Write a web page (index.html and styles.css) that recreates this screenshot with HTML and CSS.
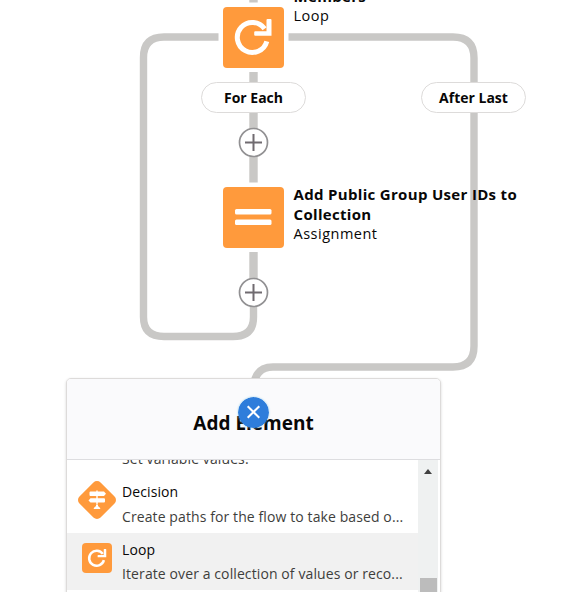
FILE: index.html
```html
<!DOCTYPE html>
<html lang="en">
<head>
    <meta charset="UTF-8">
    <meta name="viewport" content="width=device-width, initial-scale=1.0">
    <title>Flow Builder</title>
    <link rel="stylesheet" href="styles.css">
</head>
<body>
    <main class="canvas">
        <svg class="connectors" width="567" height="592" viewBox="0 0 567 592">
            <path class="stub" d="M253.500 0V2.500M253.500 72V182.500M253.500 252V300"/>
            <path d="M218.500 37H164Q143.500 37 143.500 57.500V317Q143.500 336.500 164 336.500H233Q253.500 336.500 253.500 317V290"/>
            <path d="M288.500 37H453Q474 37 474 58V346Q474 367 453 367H273Q255 367 253.500 387"/>
        </svg>

        <div class="node node-loop">
            <div class="node-icon">
                <svg width="60" height="60" viewBox="0 0 60 60">
                    <path class="loop-arc" d="M43.800 34.300A15 15 0 1 1 41.600 21.800"/>
                    <path class="loop-head" d="M43.500 13Q43.500 12 44.500 12H47.500Q48.500 12 48.500 13V28.700H32.200Q31.200 28.700 31.200 27.700V25.200Q31.200 24.200 32.200 24.200H43.500Z"/>
                </svg>
            </div>
            <div class="node-label">
                <b>Members</b>
                <span>Loop</span>
            </div>
        </div>

        <div class="node node-assignment">
            <div class="node-icon">
                <svg width="60" height="60" viewBox="0 0 60 60">
                    <rect x="12" y="22" width="36.500" height="5.500" rx="1.500" fill="#fff"/>
                    <rect x="12" y="32.500" width="36.500" height="5.500" rx="1.500" fill="#fff"/>
                </svg>
            </div>
            <div class="node-label">
                <b>Add Public Group User IDs to</b>
                <b>Collection</b>
                <span>Assignment</span>
            </div>
        </div>

        <div class="pill pill-each">For Each</div>
        <div class="pill pill-last">After Last</div>

        <svg class="plus plus-first" width="31" height="31" viewBox="0 0 31 31">
            <circle cx="15.500" cy="15.500" r="14"/>
            <path d="M15.500 7V24M7 15.500H24"/>
        </svg>
        <svg class="plus plus-second" width="31" height="31" viewBox="0 0 31 31">
            <circle cx="15.500" cy="15.500" r="14"/>
            <path d="M15.500 7V24M7 15.500H24"/>
        </svg>

        <section class="panel">
            <header class="panel-header">
                <h2>Add Element</h2>
            </header>
            <div class="panel-body">
                <ul class="elements">
                    <li class="element element-cut">
                        <span class="element-icon"></span>
                        <div class="element-text">
                            <p class="desc">Set variable values.</p>
                        </div>
                    </li>
                    <li class="element element-decision">
                        <span class="element-icon">
                            <svg width="40" height="40" viewBox="0 0 40 40">
                                <path d="M20 6L34 20L20 34L6 20Z" fill="#ff9a3c" stroke="#ff9a3c" stroke-width="10" stroke-linejoin="round"/>
                                <path d="M13.500 11.500H27L29 13.700L27 16H13.500Q12.500 16 12.500 15V12.500Q12.500 11.500 13.500 11.500ZM13.500 18.200H27Q28 18.200 28 19.200V21.600Q28 22.600 27 22.600H13.500L11.500 20.400ZM19.300 10.500H20.700V24H19.300ZM19 24.500H21V26L23.200 28V29H16.800V28L19 26Z" fill="#fff"/>
                            </svg>
                        </span>
                        <div class="element-text">
                            <p class="name">Decision</p>
                            <p class="desc">Create paths for the flow to take based o...</p>
                        </div>
                    </li>
                    <li class="element element-active">
                        <span class="element-icon">
                            <svg width="30" height="30" viewBox="0 0 60 60">
                                <rect width="60" height="60" rx="8" fill="#ff9a3c"/>
                                <path class="loop-arc" d="M43.800 34.300A15 15 0 1 1 41.600 21.800"/>
                                <path class="loop-head" d="M43.500 13Q43.500 12 44.500 12H47.500Q48.500 12 48.500 13V28.700H32.200Q31.200 28.700 31.200 27.700V25.200Q31.200 24.200 32.200 24.200H43.500Z"/>
                            </svg>
                        </span>
                        <div class="element-text">
                            <p class="name">Loop</p>
                            <p class="desc">Iterate over a collection of values or reco...</p>
                        </div>
                    </li>
                </ul>
                <div class="scrollbar">
                    <span class="arrow-up"></span>
                    <span class="thumb"></span>
                </div>
            </div>
        </section>

        <svg class="close" width="31" height="31" viewBox="0 0 31 31">
            <circle cx="15.500" cy="15.500" r="15.500"/>
            <path d="M9.700 9.200L21.300 20.800M21.300 9.200L9.700 20.800"/>
        </svg>
    </main>
</body>
</html>
```

FILE: styles.css
```css
body {
    margin: 0;
    font-family: "Open Sans", "Noto Sans", sans-serif;
    font-size: 15px;
    color: #080707;
    background-color: #fff;
}

p, h2, ul {
    margin: 0;
    padding: 0;
}

.canvas {
    position: relative;
    width: 567px;
    height: 592px;
    overflow: hidden;
}

.connectors {
    position: absolute;
    top: 0;
    left: 0;
}

.connectors path {
    fill: none;
    stroke: #c9c8c6;
    stroke-width: 7.4;
}

.connectors .stub {
    stroke-width: 8.4;
}

/* nodes */
.node {
    position: absolute;
    left: 223px;
    display: flex;
    gap: 10px;
}

.node-loop {
    top: 7px;
}

.node-assignment {
    top: 187px;
}

.node-icon {
    width: 60.5px;
    height: 60.5px;
    border-radius: 4px;
    background-color: #ff9a3c;
}

.node-icon svg {
    display: block;
}

.loop-arc {
    fill: none;
    stroke: #fff;
    stroke-width: 5;
    stroke-linecap: butt;
}

.loop-head {
    fill: #fff;
}

.node-label {
    display: flex;
    flex-direction: column;
    margin-top: -3px;
    line-height: 20px;
    font-size: 14.5px;
    letter-spacing: 0.5px;
    white-space: nowrap;
}

.node-loop .node-label {
    margin-top: -21px;
}

.node-label b {
    font-size: 15px;
    letter-spacing: 0.32px;
}

/* branch labels */
.pill {
    position: absolute;
    top: 82px;
    width: 105px;
    height: 31px;
    box-sizing: border-box;
    border: 1px solid #dddbda;
    border-radius: 16px;
    background-color: #fff;
    font-size: 14px;
    font-weight: bold;
    line-height: 30px;
    text-align: center;
}

.pill-each {
    left: 201px;
}

.pill-last {
    left: 421px;
}

.plus {
    position: absolute;
    left: 238px;
}

.plus circle {
    fill: #fff;
    stroke: #919092;
    stroke-width: 1.7;
}

.plus path {
    stroke: #706b70;
    stroke-width: 2;
}

.plus-first {
    top: 127px;
}

.plus-second {
    top: 277px;
}

/* add element menu */
.panel {
    position: absolute;
    top: 378px;
    left: 66px;
    width: 375px;
    height: 230px;
    box-sizing: border-box;
    border: 1px solid #dddbda;
    border-radius: 5px;
    background-color: #fff;
    box-shadow: 0 1px 3px rgba(0, 0, 0, 0.16);
    display: flex;
    flex-direction: column;
    overflow: hidden;
}

.panel-header {
    height: 80px;
    border-bottom: 1px solid #dddde0;
    background-color: #fafafc;
    text-align: center;
}

.panel-header h2 {
    padding-top: 30px;
    font-size: 19px;
    line-height: 28px;
}

.panel-body {
    flex: 1;
    display: flex;
    overflow: hidden;
}

.elements {
    width: 351px;
    list-style: none;
}

.element {
    display: flex;
    align-items: center;
    height: 57px;
    white-space: nowrap;
}

.element-cut {
    height: 16px;
    align-items: flex-end;
}

.element-cut .element-text {
    padding-bottom: 5px;
}

.element-active {
    background-color: #f1f1f1;
}

.element-icon {
    display: flex;
    justify-content: center;
    width: 40px;
    margin: 0 5px 0 10px;
    margin-top: -7px;
}

.element-decision .element-icon {
    margin-top: -9px;
}

.element-text {
    line-height: 24px;
    font-size: 14px;
    letter-spacing: 0.1px;
}

.element-decision .element-text {
    margin-top: -2px;
    line-height: 25px;
}

.desc {
    color: #3e3e3c;
}

.scrollbar {
    display: flex;
    flex-direction: column;
    align-items: center;
    justify-content: space-between;
    width: 20px;
    height: 132px;
    background-color: #eff1f1;
}

.arrow-up {
    margin-top: 9px;
    border-left: 4px solid transparent;
    border-right: 4px solid transparent;
    border-bottom: 5px solid #404040;
}

.thumb {
    width: 17px;
    height: 14px;
    background-color: #bcbcbc;
}

.close {
    position: absolute;
    top: 397px;
    left: 238px;
    border-radius: 50%;
    box-shadow: 0 0 2px #8fd0ee;
}

.close circle {
    fill: #2e7ddb;
}

.close path {
    stroke: #fff;
    stroke-width: 2;
}
```
